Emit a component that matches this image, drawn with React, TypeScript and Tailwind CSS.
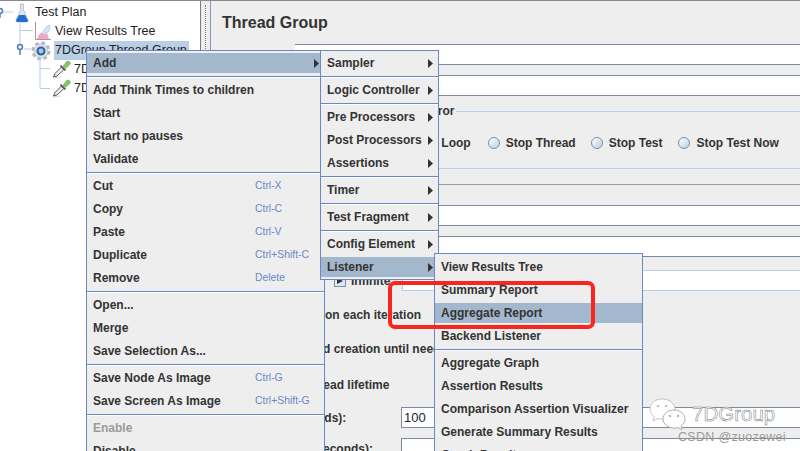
type Item = { label?: string; keys?: string; arrow?: boolean; active?: boolean; off?: boolean; sep?: boolean };

const mainMenu: Item[] = [
  { label: 'Add', arrow: true, active: true },
  { sep: true },
  { label: 'Add Think Times to children' },
  { label: 'Start' },
  { label: 'Start no pauses' },
  { label: 'Validate' },
  { sep: true },
  { label: 'Cut', keys: 'Ctrl-X' },
  { label: 'Copy', keys: 'Ctrl-C' },
  { label: 'Paste', keys: 'Ctrl-V' },
  { label: 'Duplicate', keys: 'Ctrl+Shift-C' },
  { label: 'Remove', keys: 'Delete' },
  { sep: true },
  { label: 'Open...' },
  { label: 'Merge' },
  { label: 'Save Selection As...' },
  { sep: true },
  { label: 'Save Node As Image', keys: 'Ctrl-G' },
  { label: 'Save Screen As Image', keys: 'Ctrl+Shift-G' },
  { sep: true },
  { label: 'Enable', off: true },
  { label: 'Disable' },
];

const addMenu: Item[] = [
  { label: 'Sampler', arrow: true },
  { sep: true },
  { label: 'Logic Controller', arrow: true },
  { sep: true },
  { label: 'Pre Processors', arrow: true },
  { label: 'Post Processors', arrow: true },
  { label: 'Assertions', arrow: true },
  { sep: true },
  { label: 'Timer', arrow: true },
  { sep: true },
  { label: 'Test Fragment', arrow: true },
  { sep: true },
  { label: 'Config Element', arrow: true },
  { label: 'Listener', arrow: true, active: true },
];

const listenerMenu: Item[] = [
  { label: 'View Results Tree' },
  { label: 'Summary Report' },
  { label: 'Aggregate Report', active: true },
  { label: 'Backend Listener' },
  { sep: true },
  { label: 'Aggregate Graph' },
  { label: 'Assertion Results' },
  { label: 'Comparison Assertion Visualizer' },
  { label: 'Generate Summary Results' },
  { label: 'Graph Results' },
];

function MenuRows({ items }: { items: Item[] }) {
  return (
    <>
      {items.map((it, i) =>
        it.sep ? (
          <div key={i} className="h-[4px] pt-[2px]">
            <div className="h-px bg-[#6b87c6]" />
            <div className="h-px bg-white" />
          </div>
        ) : (
          <div key={i} className="h-[23px] pt-[2px] pb-px">
            <div className={`flex h-full items-center pl-[6px] pr-[5px] ${it.active ? 'bg-[#a3b8cc]' : ''}`}>
              <span className={`flex-1 whitespace-nowrap ${it.off ? 'text-[#9a9a9a]' : 'text-[#333333]'}`}>{it.label}</span>
              {it.keys && <span className="w-[64px] text-[10.4px] font-normal whitespace-nowrap text-[#6b87c6]">{it.keys}</span>}
              {it.arrow && (
                <svg width="5" height="9" viewBox="0 0 5 9">
                  <path d="M0 0 L5 4.5 L0 9 Z" fill="#333333" />
                </svg>
              )}
            </div>
          </div>
        ),
      )}
    </>
  );
}

function FlaskIcon() {
  return (
    <svg width="20" height="20" viewBox="0 0 20 20" className="shrink-0">
      <path d="M8.5 1 L11.5 1 L11.5 7 L16 17 Q16.5 19 14.5 19 L5.5 19 Q3.5 19 4 17 L8.5 7 Z" fill="#e3e7ec" stroke="#a8b0ba" strokeWidth="0.7" />
      <path d="M7 12 L13 12 L16 17.5 Q16 19 14.5 19 L5.5 19 Q4 19 4 17.5 Z" fill="#1f6fd0" />
    </svg>
  );
}

function ChartIcon() {
  return (
    <svg width="18" height="19" viewBox="0 0 18 19" className="shrink-0">
      <path d="M1.5 0 L1.5 17.5 L17 17.5" fill="none" stroke="#a59a9a" strokeWidth="1" />
      <path d="M3 17 Q6 9 9 11 Q11 13 13 11 L15 17 Z" fill="#f2a9c8" />
      <path d="M9 10 Q11 4 16 3 Q16.5 9 13 11 Q10 12 9 10 Z" fill="#d2e3f5" stroke="#9dbbdc" strokeWidth="0.5" />
    </svg>
  );
}

function GearIcon() {
  return (
    <svg width="20" height="20" viewBox="0 0 20 20" className="shrink-0">
      <circle cx="10" cy="10" r="8" fill="none" stroke="#b4b7bb" strokeWidth="3" strokeDasharray="3.6 2.7" />
      <circle cx="10" cy="10" r="7" fill="#e2e3e5" stroke="#a4a8ad" strokeWidth="0.6" />
      <circle cx="10" cy="10" r="4.6" fill="#2f67a8" />
      <circle cx="10" cy="10" r="2.4" fill="#a9c9ec" />
    </svg>
  );
}

function PipetteIcon() {
  return (
    <svg width="19" height="19" viewBox="0 0 19 19" className="shrink-0">
      <path d="M1 18 L9 17" stroke="#d8d8d8" strokeWidth="1" />
      <path d="M1.5 17 L3 13.5 L9.5 7 L12 9.5 L5 16 Z" fill="#ececec" stroke="#55585c" strokeWidth="1" />
      <path d="M8.5 5.5 L13.5 10.5" stroke="#4a4a4a" strokeWidth="1.6" />
      <path d="M10.5 6.5 L15 1 Q18.5 0.5 18.5 4 L13 9 Z" fill="#86c26c" stroke="#6ba653" strokeWidth="0.4" />
    </svg>
  );
}

function TreeRow({ icon, text, indent, selected }: { icon: React.ReactNode; text: string; indent: string; selected?: boolean }) {
  return (
    <div className={`flex h-[19px] items-center ${indent}`}>
      {icon}
      <span className={`ml-[3px] whitespace-nowrap ${selected ? 'bg-[#b8cfe5] pr-[2px] pl-px' : ''}`}>{text}</span>
    </div>
  );
}

function Radio({ label, className }: { label: string; className?: string }) {
  return (
    <div className={`flex items-center gap-[6px] ${className ?? ''}`}>
      <span className="h-[12px] w-[12px] rounded-full border border-[#7d8fa5] bg-gradient-to-br from-white to-[#b8cfe5]" />
      <span>{label}</span>
    </div>
  );
}

export default function App() {
  return (
    <div className="relative flex h-[451px] w-[800px] overflow-hidden border-t border-[#8a8a8a] bg-[#eeeeee] font-['Liberation_Sans',sans-serif] text-[12px] font-bold text-[#333333]">
      {/* test plan tree */}
      <div className="relative h-full w-[201px] shrink-0 border-r border-[#6f7f92] bg-white pt-[2px] text-[12.5px] font-normal text-[#222222]">
        <TreeRow icon={<FlaskIcon />} text="Test Plan" indent="pl-[12px]" />
        <TreeRow icon={<ChartIcon />} text="View Results Tree" indent="pl-[34px]" />
        <TreeRow icon={<GearIcon />} text="7DGroup Thread Group" indent="pl-[31px]" selected />
        <TreeRow icon={<PipetteIcon />} text="7DGroup HTTP Request" indent="pl-[52px]" />
        <TreeRow icon={<PipetteIcon />} text="7DGroup HTTP Request" indent="pl-[52px]" />
        <svg width="60" height="100" viewBox="0 0 60 100" className="absolute top-[-1px] left-0">
          <path d="M0 12 H13 M20 23 V44 M20 30.5 H33 M24 49 H31 M40 58 V88.5 M40 68.5 H50 M40 88.5 H50" fill="none" stroke="#b8cfe5" strokeWidth="1" />
          <circle cx="0" cy="11" r="2.5" fill="#eef3f9" stroke="#4f7cb8" strokeWidth="1.4" />
          <path d="M0 14 V18" stroke="#4f7cb8" strokeWidth="1.4" />
          <circle cx="20" cy="47" r="2.5" fill="#eef3f9" stroke="#4f7cb8" strokeWidth="1.4" />
          <path d="M20 50 V55" stroke="#4f7cb8" strokeWidth="1.4" />
        </svg>
      </div>

      {/* splitter */}
      <div className="flex h-full w-[10px] shrink-0 justify-center border-r border-[#8a9bb0] pt-[4px]">
        <div className="h-full w-px border-l border-dotted border-[#777777]" />
      </div>

      {/* thread group form */}
      <div className="flex min-w-0 flex-1 flex-col">
        <div className="flex h-[43px] shrink-0 items-start pt-[13px] pl-[11px] text-[16px] leading-[18px] text-[#333333]">Thread Group</div>
        <div className="ml-[84px] h-[21px] shrink-0 border-y border-[#7b8ba0] bg-white" />
        <div className="mt-[10px] ml-[84px] h-[21px] shrink-0 border-y border-[#7b8ba0] bg-white" />

        <div className="mt-[8px] flex h-[14px] shrink-0 items-center pl-[18px]">
          <span className="whitespace-nowrap">Action to be taken after a Sampler error</span>
          <div className="ml-[2px] h-px flex-1 bg-[#b8cfe5]" />
        </div>
        <div className="mt-[15px] flex h-[20px] shrink-0 items-center pl-[23px]">
          <Radio label="Continue" />
          <Radio label="Start Next Thread Loop" className="ml-[16px]" />
          <Radio label="Stop Thread" className="ml-[17px]" />
          <Radio label="Stop Test" className="ml-[15px]" />
          <Radio label="Stop Test Now" className="ml-[16px]" />
        </div>
        <div className="mt-[15px] h-px shrink-0 bg-[#b8cfe5]" />

        <div className="mt-[15px] h-px shrink-0 bg-[#9a9a9a]" />
        <div className="mt-[20px] ml-[84px] h-[21px] shrink-0 border-y border-[#7b8ba0] bg-white" />
        <div className="mt-[10px] ml-[84px] h-[21px] shrink-0 border-y border-[#7b8ba0] bg-white" />

        <div className="mt-[13px] flex h-[21px] shrink-0 items-center pl-[123px]">
          <span className="flex h-[12px] w-[12px] shrink-0 items-center justify-center border border-[#7d8fa5] bg-[#dfe8f2]">
            <svg width="8" height="8" viewBox="0 0 8 8">
              <path d="M1 1 L7 4 L1 7 Z" fill="#333333" />
            </svg>
          </span>
          <span className="ml-[5px] w-[51px] shrink-0">Infinite</span>
          <div className="h-full flex-1 border-y border-l border-[#b8cfe5] bg-white" />
        </div>

        <div className="mt-[14px] flex h-[20px] shrink-0 items-center pl-[50px] whitespace-nowrap">Same user on each iteration</div>
        <div className="mt-[14px] flex h-[20px] shrink-0 items-center pl-[44px] whitespace-nowrap">Delay Thread creation until needed</div>
        <div className="mt-[16px] flex h-[20px] shrink-0 items-center pl-[47px] whitespace-nowrap">Specify Thread lifetime</div>

        <div className="mt-[12px] flex h-[21px] shrink-0 items-center">
          <span className="w-[190px] shrink-0 pl-[22px] whitespace-nowrap">Duration (seconds):</span>
          <div className="flex h-full flex-1 items-center border-y border-l border-[#7b8ba0] bg-white pl-[2px] text-[13px] font-normal text-[#222222]">100</div>
        </div>
        <div className="mt-[10px] flex h-[21px] shrink-0 items-center">
          <span className="w-[190px] shrink-0 pl-[22px] whitespace-nowrap">Startup delay (seconds):</span>
          <div className="h-full flex-1 border-y border-l border-[#7b8ba0] bg-white" />
        </div>
      </div>

      {/* context menus */}
      <div className="absolute top-[49px] left-[86px] w-[239px] border border-[#6b87c6] bg-[#eeeeee]">
        <MenuRows items={mainMenu} />
      </div>
      <div className="absolute top-[49px] left-[320px] w-[119px] border border-[#6b87c6] bg-[#eeeeee] pb-px">
        <MenuRows items={addMenu} />
      </div>
      <div className="absolute top-[252px] left-[434px] w-[209px] border border-[#6b87c6] bg-[#eeeeee] pt-px">
        <MenuRows items={listenerMenu} />
      </div>

      {/* red annotation */}
      <div className="absolute top-[280px] left-[388px] h-[48px] w-[207px] rounded-[7px] border-[4px] border-[#f8261c]" />

      {/* watermark */}
      <svg width="38" height="34" viewBox="0 0 38 34" className="absolute top-[397px] left-[649px]">
        <path d="M13 1 C6 1 1 5.5 1 11 C1 14.5 3 17 5.5 19 L4 23 L9 20.5 C10.5 21 12 21 14 21 C21 21 26 16.5 26 11 C26 5.5 20 1 13 1 Z" fill="#ffffff" stroke="#c4c4c4" strokeWidth="1" />
        <path d="M25 12 C18 12 14 16.5 14 21 C14 26 19 30 25 30 C26.5 30 28 30 29 29.5 L33 32 L32 28 C34.5 26 36 24 36 21 C36 16.5 32 12 25 12 Z" fill="#ffffff" stroke="#b0b0b0" strokeWidth="1" />
        <circle cx="9" cy="8" r="1.3" fill="#c4c4c4" />
        <circle cx="17" cy="8" r="1.3" fill="#c4c4c4" />
        <circle cx="21" cy="18" r="1.2" fill="#b0b0b0" />
        <circle cx="29" cy="18" r="1.2" fill="#b0b0b0" />
      </svg>
      <div className="absolute top-[400px] left-[692px] text-[20.5px] leading-[26px] font-normal text-white [-webkit-text-stroke:0.5px_#777777]">7DGroup</div>
      <div className="absolute top-[429px] left-[678px] text-[12.5px] leading-[14px] font-normal tracking-[0.3px] text-[#9a9a9a]">CSDN @zuozewei</div>
    </div>
  );
}
